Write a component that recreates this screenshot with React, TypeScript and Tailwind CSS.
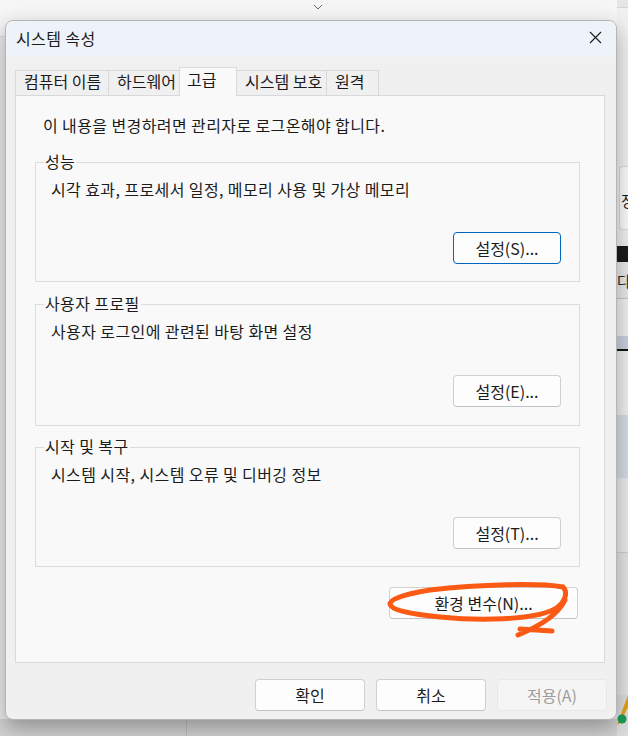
import React from 'react';

const FONT = "font-['Noto_Sans_CJK_KR','Noto_Sans',sans-serif]";

interface WinButtonProps {
  label: string;
  primary?: boolean;
  disabled?: boolean;
  width: string;
}

function WinButton({ label, primary, disabled, width }: WinButtonProps) {
  return (
    <div
      className={`flex items-center justify-center h-[32px] rounded-[4px] border text-[16px] leading-[20px] ${width} ${
        primary
          ? 'border-[#0067c0] bg-[#fdfdfd] text-[#1b1b1b]'
          : disabled
          ? 'border-[#e8e8e8] bg-[#f5f5f5] text-[#9d9d9d]'
          : 'border-[#d0d0d0] border-b-[#c2c2c2] bg-[#fdfdfd] text-[#1b1b1b]'
      }`}
    >
      {label}
    </div>
  );
}

interface GroupProps {
  title: string;
  desc: string;
  button: string;
  height: string;
  primary?: boolean;
  bottom: string;
}

function Group({ title, desc, button, height, primary, bottom }: GroupProps) {
  return (
    <div className={`relative flex flex-col justify-between border border-[#dcdcdc] ${height}`}>
      <span className="absolute -top-[12px] left-[8px] bg-[#f9f9f9] px-[1px] text-[16px] tracking-[0.4px] leading-[20px] text-[#1b1b1b]">
        {title}
      </span>
      <div className="pt-[16px] pl-[15px] text-[16px] tracking-[0.4px] leading-[20px] text-[#1b1b1b]">{desc}</div>
      <div className={`self-end pr-[18px] ${bottom}`}>
        <WinButton label={button} primary={primary} width="w-[108px]" />
      </div>
    </div>
  );
}

const tabs = [
  { label: '컴퓨터 이름', width: 'w-[94px]' },
  { label: '하드웨어', width: 'w-[72px]' },
  { label: '고급', width: 'w-[58px]', active: true },
  { label: '시스템 보호', width: 'w-[91px]' },
  { label: '원격', width: 'w-[53px]' },
];

export default function App() {
  return (
    <div className={`relative w-[628px] h-[736px] overflow-hidden bg-[#e4e4e4] ${FONT}`}>
      {/* Desktop / app behind the dialog */}
      <div className="flex w-full h-full">
        <div className="flex flex-col w-[617px] h-full">
          <div className="h-[37px] bg-[#f6f6f6] border-b border-[#dedede] pl-[313px] pt-[4px]">
            <svg width="10" height="6" viewBox="0 0 10 6" className="block">
              <polyline points="1,1 5,5 9,1" fill="none" stroke="#6b6b6b" strokeWidth="1" />
            </svg>
          </div>
          <div className="flex-1 bg-[#ececec]" />
          <div className="flex h-[17px] bg-[#d2d2d2]">
            <div className="w-[187px] border-r border-[#bdbdbd]" />
          </div>
        </div>
        <div className="flex flex-col w-[11px] h-full">
          <div className="h-[8px] bg-[#e6e6e6] border-b border-[#d4d4d4]" />
          <div className="h-[157px] bg-[#f1f1f1]" />
          <div className="h-[66px] bg-[#f1f1f1] pl-[2px] py-[1px]">
            <div className="h-full rounded-l-[4px] border border-r-0 border-[#dcdcdc] bg-[#fbfbfb] overflow-hidden pt-[24px] pl-[1px] text-[15px] leading-[20px] text-[#1b1b1b] whitespace-nowrap">
              정
            </div>
          </div>
          <div className="h-[15px] bg-[#f1f1f1]" />
          <div className="h-[16px] bg-[#1c1c1c]" />
          <div className="h-[36px] bg-[#e9e9e9] pt-[9px] text-[15px] leading-[20px] text-[#2a2a2a] whitespace-nowrap overflow-hidden">
            다
          </div>
          <div className="h-[38px] bg-[#f0f0f0] border-t border-[#c9c9c9]" />
          <div className="h-[15px] bg-[#c9d1de] border-b-2 border-[#141414]" />
          <div className="h-[64px] bg-[#f0f0f0]" />
          <div className="h-[63px] bg-[#d6dce6]" />
          <div className="h-[75px] bg-[#ebebeb] border-b border-[#d0d0d0]" />
          <div className="h-[142px] bg-[#e5e5e5]" />
          <div className="flex-1 bg-[#dedede]">
            <svg width="11" height="40" viewBox="0 0 11 40" className="block">
              <polygon points="11,0 11,12 3,28 0,30" fill="#e8a316" />
              <circle cx="5" cy="24" r="4.5" fill="#1f9d55" />
            </svg>
          </div>
        </div>
      </div>

      {/* Dialog window */}
      <div className="absolute left-[5px] top-[20px] w-[612px] h-[700px] flex flex-col rounded-[8px] border border-[#b5b5b5] bg-[#f0f0f0] overflow-hidden shadow-[0_8px_22px_rgba(0,0,0,0.32)]">
        <div className="flex items-center justify-between h-[36px] bg-[#eef3fa] pl-[10px] pr-[14px] pb-[3px]">
          <span className="text-[16px] tracking-[0.4px] leading-[20px] text-[#1b1b1b]">시스템 속성</span>
          <svg width="13" height="13" viewBox="0 0 13 13" className="block">
            <path d="M1 1 L12 12 M12 1 L1 12" stroke="#1b1b1b" strokeWidth="1.1" />
          </svg>
        </div>

        <div className="flex-1 flex flex-col pl-[9px] pr-[9px] pt-[10px]">
          {/* Tabs */}
          <div className="flex h-[28px] items-start">
            {tabs.map((t, i) =>
              t.active ? (
                <div
                  key={t.label}
                  className={`relative z-10 -ml-px h-[29px] ${t.width} border border-b-0 border-[#d9d9d9] bg-[#f9f9f9] pl-[7px] pt-[1px] text-[16px] leading-[20px] text-[#1b1b1b]`}
                >
                  {t.label}
                </div>
              ) : (
                <div
                  key={t.label}
                  className={`mt-[3px] h-[25px] ${t.width} ${i === 0 ? '' : '-ml-px'} border border-b-0 border-[#d9d9d9] bg-[#f0f0f0] pl-[8px] text-[16px] leading-[20px] text-[#1b1b1b] whitespace-nowrap`}
                >
                  {t.label}
                </div>
              )
            )}
          </div>

          {/* Tab panel */}
          <div className="flex flex-col h-[568px] mr-[2px] border border-[#d9d9d9] bg-[#f9f9f9] pl-[19px] pr-[24px] pt-[19px]">
            <div className="ml-[8px] text-[16px] tracking-[0.4px] leading-[20px] text-[#1b1b1b]">
              이 내용을 변경하려면 관리자로 로그온해야 합니다.
            </div>
            <div className="mt-[27px]">
              <Group
                title="성능"
                desc="시각 효과, 프로세서 일정, 메모리 사용 및 가상 메모리"
                button="설정(S)..."
                height="h-[120px]"
                bottom="pb-[17px]"
                primary
              />
            </div>
            <div className="mt-[22px]">
              <Group
                title="사용자 프로필"
                desc="사용자 로그인에 관련된 바탕 화면 설정"
                button="설정(E)..."
                height="h-[122px]"
                bottom="pb-[18px]"
              />
            </div>
            <div className="mt-[21px]">
              <Group
                title="시작 및 복구"
                desc="시스템 시작, 시스템 오류 및 디버깅 정보"
                button="설정(T)..."
                height="h-[120px]"
                bottom="pb-[17px]"
              />
            </div>
            <div className="mt-[20px] self-end mr-[2px]">
              <WinButton label="환경 변수(N)..." width="w-[189px]" />
            </div>
          </div>

          {/* Dialog buttons */}
          <div className="flex justify-end gap-[11px] mt-[16px]">
            <WinButton label="확인" width="w-[110px]" />
            <WinButton label="취소" width="w-[110px]" />
            <WinButton label="적용(A)" width="w-[110px]" disabled />
          </div>
        </div>
      </div>

      {/* Hand-drawn annotation */}
      <svg
        width="628"
        height="736"
        viewBox="0 0 628 736"
        className="absolute left-0 top-0 pointer-events-none"
      >
        <path
          d="M563 587 C540 583 480 584 430 590 C405 594 390 599 390 604 C391 610 410 614 440 617 C480 621 530 620 553 610 C566 603 568 592 563 587 M565 600 C558 615 540 626 518 635 M520 629 L552 631"
          fill="none"
          stroke="#fa5a14"
          strokeWidth="5"
          strokeLinecap="round"
          strokeLinejoin="round"
        />
      </svg>
    </div>
  );
}
